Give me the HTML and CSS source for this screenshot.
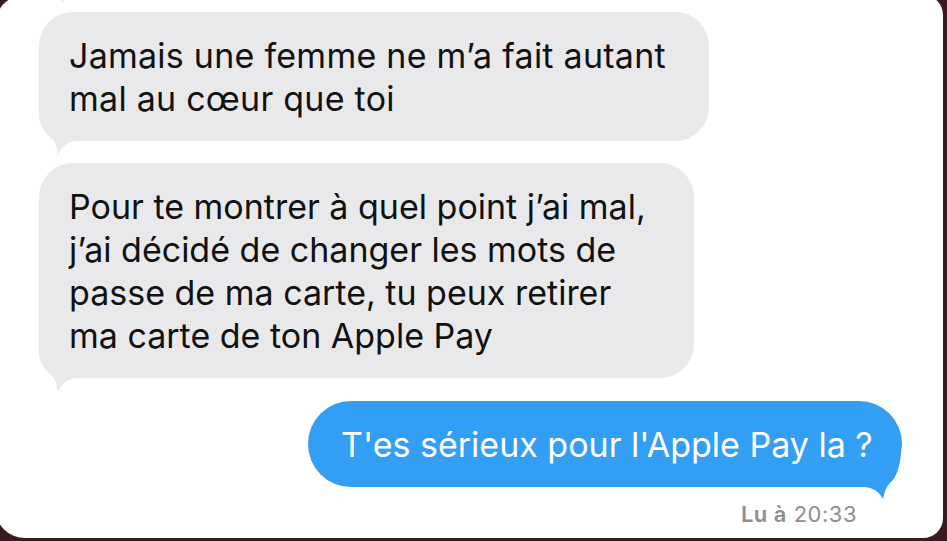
FILE: index.html
```html
<!DOCTYPE html>
<html lang="fr">
<head>
<meta charset="utf-8">
<title>Messages</title>
<link rel="stylesheet" href="styles.css">
</head>
<body>
<div class="card">
  <div class="stub">
    <svg class="tail tail-in stub-tail" width="44" height="50" viewBox="0 0 44 50"><path d="M0,0 L0,8 C0,20 8,28 14,33 C17,36 18,42 19,48 C21,43 25,37 32,35 C35,34.3 38,34 44,34 L44,0 Z"/></svg>
  </div>
  <div class="bubble in b1">
    <p class="text">Jamais une femme ne m’a fait autant<br>mal au cœur que toi</p>
    <svg class="tail tail-in" width="44" height="50" viewBox="0 0 44 50"><path d="M0,0 L0,8 C0,20 8,28 14,33 C17,36 18,42 19,48 C21,43 25,37 32,35 C35,34.3 38,34 44,34 L44,0 Z"/></svg>
  </div>
  <div class="bubble in b2">
    <p class="text">Pour te montrer à quel point j’ai mal,<br>j’ai décidé de changer les mots de<br>passe de ma carte, tu peux retirer<br>ma carte de ton Apple Pay</p>
    <svg class="tail tail-in" width="44" height="50" viewBox="0 0 44 50"><path d="M0,0 L0,8 C0,20 8,28 14,33 C17,36 18,42 19,48 C21,43 25,37 32,35 C35,34.3 38,34 44,34 L44,0 Z"/></svg>
  </div>
  <div class="bubble out">
    <p class="text">T'es sérieux pour l'Apple Pay la ?</p>
    <svg class="tail tail-out" width="44" height="50" viewBox="0 0 44 50"><path d="M1,0 C2,14 6,25 12,30 C16,34 18,40 19,46 C21,42 25,37 32,35 C35,34.3 38,34 44,34 L44,0 Z"/></svg>
  </div>
  <div class="status"><b>Lu à</b> 20:33</div>
</div>
</body>
</html>
```
FILE: styles.css
```css
html, body {
  margin: 0;
  padding: 0;
}
body {
  width: 947px;
  height: 541px;
  overflow: hidden;
  background: #3b1a20;
  font-family: Inter, "Noto Sans", sans-serif;
  color: #111;
}
.card {
  margin: -5px 0 0 -5px;
  width: 948px;
  height: 543px;
  box-sizing: border-box;
  padding: 17px 0 0 44px;
  background: #fff;
  border-radius: 30px 20px 20px 30px;
  overflow: hidden;
  display: flex;
  flex-direction: column;
}
.stub {
  position: relative;
  height: 0;
}
.bubble {
  position: relative;
  box-sizing: border-box;
  padding: 22px 0 21px 30px;
  border-radius: 34px;
}
.text {
  position: relative;
  z-index: 1;
  margin: 0;
  font-size: 34px;
  line-height: 43px;
  white-space: nowrap;
}
.in {
  background: #e9e9eb;
  color: #111;
}
.b1 {
  width: 670px;
}
.b1 .text {
  letter-spacing: 0.25px;
}
.b2 {
  width: 655px;
  margin-top: 22px;
}
.out {
  align-self: flex-end;
  width: 594px;
  margin-top: 23px;
  margin-right: 41px;
  padding-left: 33px;
  border-radius: 43px;
  background: #329ef4;
  color: #fff;
}
.tail {
  display: block;
  position: absolute;
  bottom: -16px;
}
.tail-in {
  left: 0;
  fill: #e9e9eb;
}
.stub-tail {
  bottom: auto;
  top: -56px;
  left: 4px;
}
.tail-out {
  right: 0;
  transform: scaleX(-1);
  fill: #329ef4;
}
.status {
  align-self: flex-end;
  margin-top: 14px;
  margin-right: 86px;
  font-size: 22px;
  line-height: 26px;
  letter-spacing: 0.5px;
  color: #8e8e93;
}
.status b {
  font-weight: 600;
}
```
